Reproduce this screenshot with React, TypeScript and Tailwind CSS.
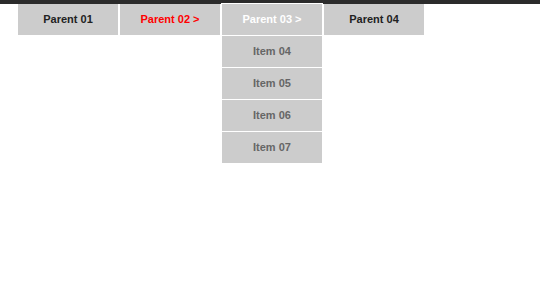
export default function App() {
  const parents = [
    { label: 'Parent 01', cls: 'text-[#222]' },
    { label: 'Parent 02 >', cls: 'text-[#ff0000]' },
    { label: 'Parent 03 >', cls: 'text-white', active: true },
    { label: 'Parent 04', cls: 'text-[#222]' },
  ];
  const items = ['Item 04', 'Item 05', 'Item 06', 'Item 07'];

  return (
    <div className="min-h-[304px] w-[540px] bg-white" style={{ fontFamily: '"Liberation Sans", Arial, sans-serif' }}>
      <div className="h-[4px] bg-[#2b2b2b]" />
      <ul className="flex gap-[2px] pl-[18px]">
        {parents.map((p) => (
          <li key={p.label} className="relative w-[100px]">
            <div
              className={`flex h-[31px] items-center justify-center bg-[#cccccc] text-[11px] font-bold ${p.cls} ${
                p.active ? 'outline outline-1 outline-white' : ''
              }`}
            >
              {p.label}
            </div>
            {p.active && (
              <ul className="absolute left-0 top-[32px] flex w-[100px] flex-col gap-[1px]">
                {items.map((it) => (
                  <li
                    key={it}
                    className="flex h-[31px] items-center justify-center bg-[#cccccc] text-[11px] font-bold text-[#666]"
                  >
                    {it}
                  </li>
                ))}
              </ul>
            )}
          </li>
        ))}
      </ul>
    </div>
  );
}
